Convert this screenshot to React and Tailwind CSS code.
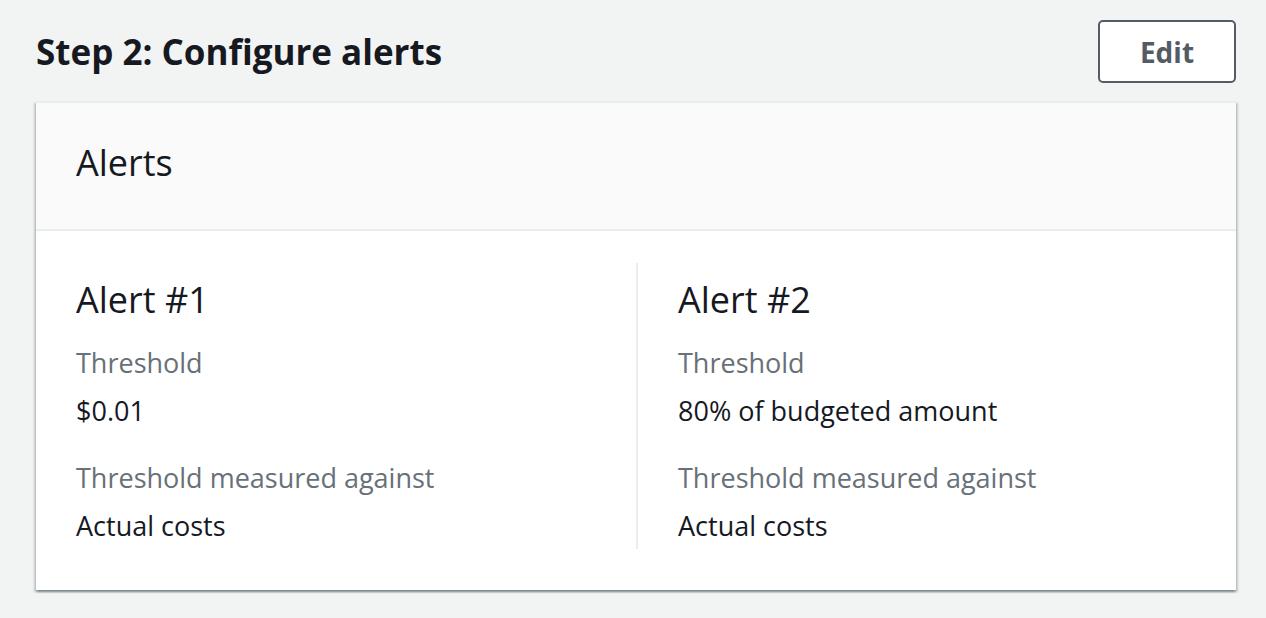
const alerts = [
  {
    name: "Alert #1",
    threshold: "$0.01",
    measuredAgainst: "Actual costs",
  },
  {
    name: "Alert #2",
    threshold: "80% of budgeted amount",
    measuredAgainst: "Actual costs",
  },
];

const AlertColumn = ({ alert, divider }) => (
  <div className={divider ? "border-l-2 border-[#eaeded] pl-10" : "pr-10"}>
    <h3 className="mt-[15px] text-[36px] leading-[44px] font-normal text-[#16191f]">
      {alert.name}
    </h3>
    <div className="mt-[21px] text-[27px] leading-[40px] text-[#687078]">
      Threshold
    </div>
    <div className="mt-[8px] text-[27px] leading-[40px] text-[#16191f]">
      {alert.threshold}
    </div>
    <div className="mt-[27px] text-[27px] leading-[40px] text-[#687078]">
      Threshold measured against
    </div>
    <div className="mt-[8px] mb-[3px] text-[27px] leading-[40px] text-[#16191f]">
      {alert.measuredAgainst}
    </div>
  </div>
);

const App = () => {
  return (
    <div
      className="min-h-screen bg-[#f2f3f3] pl-[36px] pt-[20px]"
      style={{ fontFamily: '"Open Sans", "Noto Sans", sans-serif' }}
    >
      <div className="w-[1200px]">
        {/* Header */}
        <div className="flex items-center justify-between">
          <h2 className="text-[35px] leading-[44px] font-bold text-[#16191f]">
            Step 2: Configure alerts
          </h2>
          <button className="w-[138px] h-[63px] rounded-[5px] border-2 border-[#545b64] bg-white text-[28px] font-bold text-[#545b64]">
            Edit
          </button>
        </div>

        {/* Alerts card */}
        <div className="mt-[18px] bg-white border-t-2 border-[#eaeded] shadow-[0_2px_2px_0_rgba(0,28,36,0.3),2px_2px_2px_0_rgba(0,28,36,0.15),-2px_2px_2px_0_rgba(0,28,36,0.15)]">
          <div className="h-[128px] bg-[#fafafa] border-b-2 border-[#eaeded] px-10 pt-[38px]">
            <h2 className="text-[36px] leading-[44px] font-normal text-[#16191f]">
              Alerts
            </h2>
          </div>
          <div className="px-10 pt-8 pb-[41px]">
            <div className="grid grid-cols-2">
              {alerts.map((alert, i) => (
                <AlertColumn key={alert.name} alert={alert} divider={i > 0} />
              ))}
            </div>
          </div>
        </div>
      </div>
    </div>
  );
};

export default App;
